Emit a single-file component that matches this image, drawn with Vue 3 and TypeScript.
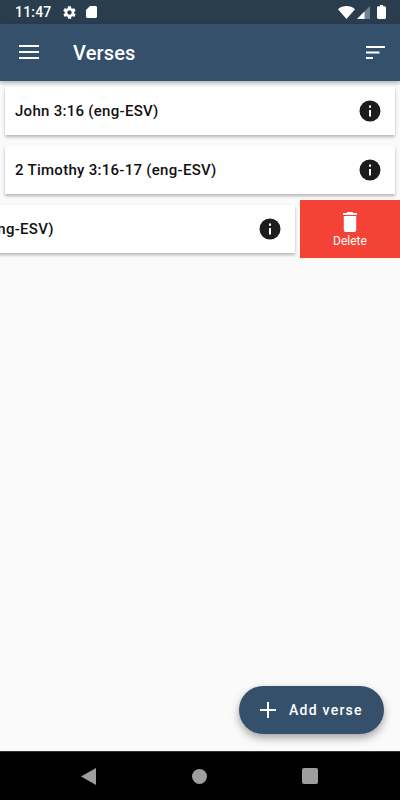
<script setup lang="ts">
type Verse = { id: number; title: string; swiped?: boolean }

const verses: Verse[] = [
  { id: 1, title: 'John 3:16 (eng-ESV)' },
  { id: 2, title: '2 Timothy 3:16-17 (eng-ESV)' },
  { id: 3, title: 'Joel 2:32 (eng-ESV)', swiped: true },
]
</script>

<template>
  <div class="phone">
    <div class="status">
      <span class="time">11:47</span>
      <svg class="st-gear" viewBox="0 0 24 24" width="15" height="15"><path fill="#fff" d="M19.4 13c0-.3.1-.6.1-1s0-.7-.1-1l2.1-1.6c.2-.2.2-.4.1-.6l-2-3.500c-.1-.2-.4-.3-.6-.2l-2.500 1c-.5-.4-1.100-.7-1.700-1l-.4-2.700c0-.2-.2-.4-.5-.4h-4c-.2 0-.4.2-.5.4l-.4 2.700c-.6.2-1.100.6-1.700 1l-2.500-1c-.2-.1-.5 0-.6.2l-2 3.500c-.1.2-.1.5.1.6L4.600 11c0 .3-.1.6-.1 1s0 .7.1 1l-2.100 1.600c-.2.2-.2.4-.1.6l2 3.500c.1.2.4.3.6.2l2.500-1c.5.4 1.100.7 1.700 1l.4 2.700c0 .2.2.4.5.4h4c.2 0 .4-.2.5-.4l.4-2.700c.6-.2 1.100-.6 1.700-1l2.500 1c.2.1.5 0 .6-.2l2-3.500c.1-.2.1-.5-.1-.6L19.400 13zM12 15.500c-1.900 0-3.500-1.600-3.500-3.500s1.600-3.500 3.500-3.500 3.500 1.600 3.500 3.500-1.600 3.500-3.500 3.500z"/></svg>
      <svg class="st-sd" viewBox="0 0 11 12" width="11" height="12"><path fill="#fff" d="M4 0h5.500C10.300 0 11 .7 11 1.500v9c0 .8-.7 1.500-1.500 1.500h-8C.7 12 0 11.300 0 10.500V4z"/></svg>
      <span class="grow"></span>
      <svg viewBox="0 0 17 13" width="17" height="13"><path fill="#fff" d="M0 3.200C2.400 1.200 5.300 0 8.500 0s6.100 1.200 8.500 3.200L8.500 13z"/></svg>
      <svg class="st-signal" viewBox="0 0 13 13" width="13" height="13"><path fill="#fff" fill-opacity=".35" d="M13 0v13H0z"/><path fill="#fff" d="M7.500 5.500V13H0z"/></svg>
      <svg class="st-batt" viewBox="0 0 9 14" width="9" height="14"><path fill="#fff" d="M3 0h3v1.300h1.500c.8 0 1.500.6 1.500 1.400v9.800c0 .8-.7 1.500-1.500 1.500h-6C.7 14 0 13.300 0 12.500V2.700c0-.8.7-1.400 1.500-1.400H3z"/></svg>
    </div>

    <header class="appbar">
      <svg class="menu" viewBox="0 0 20 14" width="20" height="14"><path fill="#fff" d="M0 0h20v2H0zM0 6h20v2H0zM0 12h20v2H0z"/></svg>
      <h1>Verses</h1>
      <span class="grow"></span>
      <svg class="sort" viewBox="0 0 19 13" width="19" height="13"><path fill="#fff" d="M0 0h19v2H0zM0 5.500h13.500v2H0zM0 11h7v2H0z"/></svg>
    </header>

    <main class="content">
      <div v-for="v in verses" :key="v.id" class="row" :class="{ swiped: v.swiped }">
        <div class="card">
          <span class="title">{{ v.title }}</span>
          <svg class="info" viewBox="0 0 22 22" width="22" height="22">
            <circle cx="11" cy="11" r="10.500" fill="#1c1c1c"/>
            <path fill="#fff" d="M10 10h2v6.500h-2zM10 5.500h2v2.300h-2z"/>
          </svg>
        </div>
        <div v-if="v.swiped" class="delete">
          <svg viewBox="0 0 14 20" width="14" height="20"><path fill="#fff" d="M4.500 0h5l1 1H14v2H0V1h3.500zM.8 4h12.400v14c0 1.100-.9 2-2 2H2.800c-1.100 0-2-.9-2-2z"/></svg>
          <span>Delete</span>
        </div>
      </div>

      <button class="fab">
        <svg viewBox="0 0 16 16" width="16" height="16"><path fill="#fff" d="M7 0h2v7h7v2H9v7H7V9H0V7h7z"/></svg>
        <span>Add verse</span>
      </button>
    </main>

    <nav class="navbar">
      <svg viewBox="0 0 15 17" width="15" height="17"><path fill="#9e9e9e" d="M15 0v17L0 8.500z"/></svg>
      <span class="circle"></span>
      <span class="square"></span>
    </nav>
  </div>
</template>

<style scoped>
.phone { width: 400px; height: 800px; display: flex; flex-direction: column; font-family: Roboto, "Liberation Sans", sans-serif; background: #fafafa; overflow: hidden; }
.grow { flex: 1; }

.status { height: 24px; flex: none; display: flex; align-items: center; padding: 0 14px 0 15px; background: #2a3d4f; color: #fff; }
.time { font-size: 14px; font-weight: 500; margin-right: 10px; letter-spacing: .2px; }
.st-gear { margin-right: 9px; }
.st-signal { margin-left: 2px; margin-right: 7px; }

.appbar { height: 57px; flex: none; display: flex; align-items: center; padding: 0 15px 0 19px; background: #34506b; color: #fff; box-shadow: 0 2px 4px rgba(0,0,0,.3); z-index: 2; }
.appbar h1 { margin: 1px 0 0 34px; font-size: 20px; font-weight: 500; letter-spacing: .15px; }
.menu { margin-top: -1px; }
.sort { margin-top: -1px; }

.content { flex: 1; position: relative; display: flex; flex-direction: column; padding-top: 6px; gap: 11px; background: #fafafa; }
.row { position: relative; height: 48px; padding: 0 5px; }
.card { height: 48px; display: flex; align-items: center; justify-content: space-between; padding: 0 14px 0 10px; background: #fff; box-shadow: 0 2px 3px rgba(0,0,0,.28); }
.title { font-size: 15px; font-weight: 500; color: #111; letter-spacing: .28px; white-space: nowrap; }
.swiped .card { transform: translateX(-100px); }

.delete { position: absolute; top: -5px; right: 0; width: 100px; height: 58px; display: flex; flex-direction: column; align-items: center; justify-content: center; padding-top: 2px; box-sizing: border-box; gap: 2px; background: #f44336; color: #fff; font-size: 12px; }

.fab { position: absolute; right: 16px; bottom: 17px; width: 145px; height: 48px; display: flex; align-items: center; gap: 13px; padding: 0 0 0 21px; border: 0; border-radius: 24px; background: #34506b; color: #fff; font-family: inherit; font-size: 14px; font-weight: 500; letter-spacing: 1.25px; box-shadow: 0 4px 8px rgba(0,0,0,.35); }

.navbar { height: 49px; flex: none; display: flex; align-items: center; background: #000; padding: 0 82px 0 81px; justify-content: space-between; border-top: 1px solid #333; box-sizing: border-box; }
.circle { width: 15px; height: 15px; border-radius: 50%; background: #9e9e9e; }
.square { width: 16px; height: 16px; border-radius: 2px; background: #9e9e9e; }
</style>
